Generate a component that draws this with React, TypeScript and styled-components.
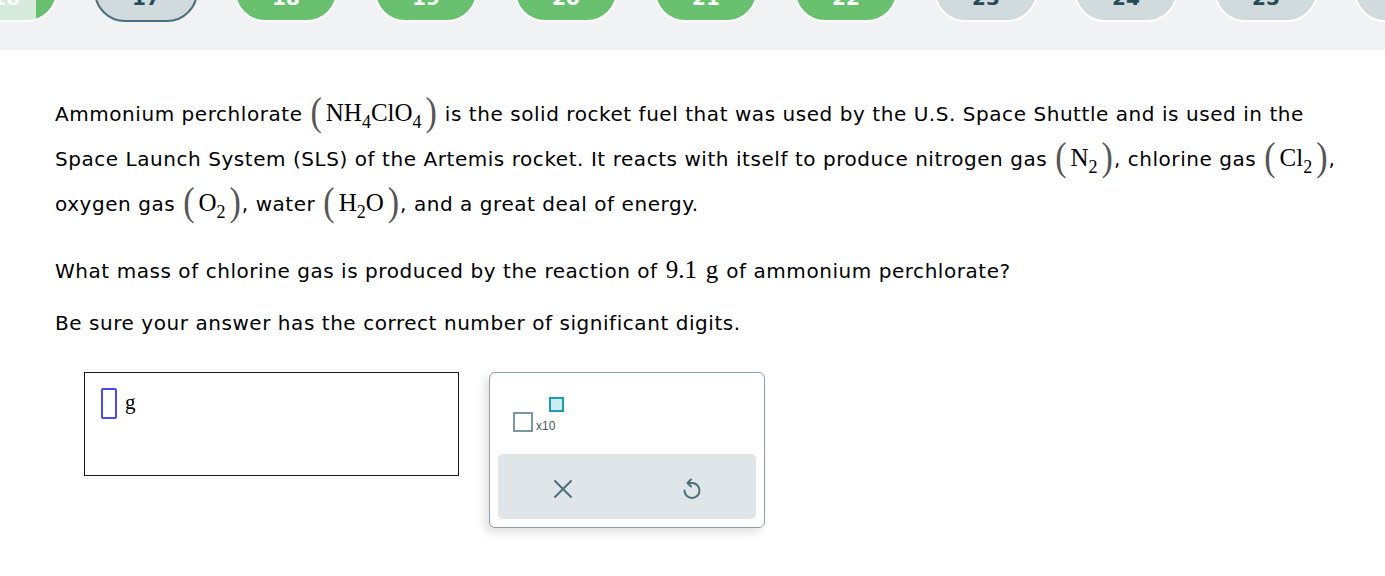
import styled, { createGlobalStyle } from "styled-components";

const GlobalStyle = createGlobalStyle`
    html, body {
        margin: 0;
        padding: 0;
        background: #ffffff;
    }
    body {
        font-family: "DejaVu Sans", Verdana, sans-serif;
        color: #000000;
    }
`

const pills = [
    {n: 16, state: "done"},
    {n: 17, state: "current"},
    {n: 18, state: "done"},
    {n: 19, state: "done"},
    {n: 20, state: "done"},
    {n: 21, state: "done"},
    {n: 22, state: "done"},
    {n: 23, state: "todo"},
    {n: 24, state: "todo"},
    {n: 25, state: "todo"},
    {n: 26, state: "todo"},
] as const;

type PillState = "done" | "current" | "todo";

export default function App() {
    return (
        <>
            <GlobalStyle/>
            <Page>
                <TopBar>
                    <PillRow>
                        {pills.map((p, i) => (
                            <Pill key={p.n} $state={p.state} $faded={i === 0}>
                                {p.n}
                            </Pill>
                        ))}
                    </PillRow>
                </TopBar>

                <Content>
                    <Paragraph>
                        Ammonium perchlorate{" "}
                        <Chem>
                            <Paren>(</Paren>
                            <MathText>NH<Sub>4</Sub>ClO<Sub>4</Sub></MathText>
                            <Paren>)</Paren>
                        </Chem>{" "}
                        is the solid rocket fuel that was used by the U.S. Space Shuttle and is used in the Space
                        Launch System (SLS) of the Artemis rocket. It reacts with itself to produce nitrogen gas{" "}
                        <Chem>
                            <Paren>(</Paren>
                            <MathText>N<Sub>2</Sub></MathText>
                            <Paren>)</Paren>
                        </Chem>
                        , chlorine gas{" "}
                        <Chem>
                            <Paren>(</Paren>
                            <MathText>Cl<Sub>2</Sub></MathText>
                            <Paren>)</Paren>
                        </Chem>
                        , oxygen gas{" "}
                        <Chem>
                            <Paren>(</Paren>
                            <MathText>O<Sub>2</Sub></MathText>
                            <Paren>)</Paren>
                        </Chem>
                        , water{" "}
                        <Chem>
                            <Paren>(</Paren>
                            <MathText>H<Sub>2</Sub>O</MathText>
                            <Paren>)</Paren>
                        </Chem>
                        , and a great deal of energy.
                    </Paragraph>

                    <Question>
                        What mass of chlorine gas is produced by the reaction of{" "}
                        <InlineMath>9.1</InlineMath> <InlineMath>g</InlineMath> of ammonium perchlorate?
                    </Question>
                    <Note>Be sure your answer has the correct number of significant digits.</Note>

                    <AnswerRow>
                        <AnswerBox>
                            <Cursor/>
                            <Unit>g</Unit>
                        </AnswerBox>

                        <ToolPanel>
                            <Template>
                                <BaseSlot/>
                                <TimesTen>x10</TimesTen>
                                <ExpSlot/>
                            </Template>
                            <ButtonBar>
                                <ToolButton aria-label="clear">
                                    <svg width="20" height="20" viewBox="0 0 20 20" fill="none"
                                         stroke="#4b6f7c" strokeWidth="2" strokeLinecap="round">
                                        <path d="M2 2 L18 18 M18 2 L2 18"/>
                                    </svg>
                                </ToolButton>
                                <ToolButton aria-label="undo">
                                    <svg width="22" height="22" viewBox="0 0 22 22" fill="none"
                                         stroke="#4b6f7c" strokeWidth="2" strokeLinecap="round"
                                         strokeLinejoin="round">
                                        <path d="M7 5 H11 A7.5 7.5 0 1 1 3.5 12.5"/>
                                        <path d="M10 1.5 L6.5 5 L10 8.5"/>
                                    </svg>
                                </ToolButton>
                            </ButtonBar>
                        </ToolPanel>
                    </AnswerRow>
                </Content>
            </Page>
        </>
    );
}

const Page = styled.div`
    width: 1385px;
    min-height: 576px;
    background: #ffffff;
`
const TopBar = styled.div`
    height: 50px;
    background: #f1f2f4;
    overflow: hidden;
`
const PillRow = styled.div`
    display: flex;
    gap: 36px;
    margin-left: -46px;
`
const Pill = styled.div<{ $state: PillState; $faded?: boolean }>`
    flex: 0 0 auto;
    width: 100px;
    height: 58px;
    margin-top: -40px;
    box-sizing: content-box;
    border: 2px solid ${p => (p.$state === "current" ? "#4b7080" : "#ffffff")};
    border-radius: 32px;
    background: ${p => p.$faded
            ? "linear-gradient(to right, #d6eadb 0, #d6eadb 80px, #69c16f 80px)"
            : p.$state === "done" ? "#69c16f" : "#d1dadd"};
    color: ${p => (p.$state === "done" ? "#ffffff" : "#234b5a")};
    font-family: "DejaVu Sans", sans-serif;
    font-weight: 700;
    font-size: 20px;
    line-height: 20px;
    display: flex;
    flex-direction: column;
    align-items: center;

    &::before {
        content: "";
        height: 26px;
        flex: 0 0 auto;
    }
`
const Content = styled.div`
    padding: 42px 40px 0 55px;
`
const Paragraph = styled.p`
    margin: 0;
    font-size: 20px;
    letter-spacing: 0.55px;
    line-height: 45px;
    width: 1296px;
`
const Chem = styled.span`
    display: inline-flex;
    align-items: center;
    vertical-align: middle;
    line-height: 1;
    height: 40px;
    margin-top: -6px;
    letter-spacing: 0;
`
const Paren = styled.span`
    font-family: "Liberation Serif", "Times New Roman", serif;
    font-size: 34px;
    font-weight: 300;
    color: #555555;
    display: inline-block;
    transform: scaleY(1.2);
    margin-top: -2px;
    padding: 0 1px;
`
const MathText = styled.span`
    font-family: "Liberation Serif", "Times New Roman", serif;
    font-size: 25px;
    padding: 0 3px;
`
const Sub = styled.span`
    font-size: 18px;
    position: relative;
    top: 7px;
`
const Question = styled.p`
    margin: 29px 0 0;
    font-size: 20px;
    letter-spacing: 0.55px;
    line-height: 30px;
`
const InlineMath = styled.span`
    font-family: "Liberation Serif", "Times New Roman", serif;
    font-size: 25px;
    letter-spacing: 0;
    line-height: 1;
    padding: 0 1px;
`
const Note = styled.p`
    margin: 22px 0 0;
    font-size: 20px;
    letter-spacing: 0.55px;
    line-height: 30px;
`
const AnswerRow = styled.div`
    display: flex;
    align-items: flex-start;
    gap: 30px;
    margin: 34px 0 0 29px;
`
const AnswerBox = styled.div`
    box-sizing: border-box;
    width: 375px;
    height: 104px;
    border: 1px solid #1a1a1a;
    padding: 15px 16px;
    display: flex;
    align-items: flex-start;
    gap: 8px;
`
const Cursor = styled.span`
    box-sizing: border-box;
    width: 16px;
    height: 31px;
    border: 2px solid #4a4af4;
    border-radius: 2px;
`
const Unit = styled.span`
    font-family: "Liberation Serif", "Times New Roman", serif;
    font-size: 21px;
    line-height: 26px;
    margin-top: 1px;
`
const ToolPanel = styled.div`
    box-sizing: border-box;
    width: 276px;
    height: 156px;
    border: 1px solid #8ba1a9;
    border-radius: 6px;
    background: #ffffff;
    box-shadow: -4px 5px 10px rgba(0, 0, 0, 0.12);
    padding: 8px;
    display: flex;
    flex-direction: column;
    justify-content: space-between;
`
const Template = styled.div`
    display: flex;
    align-items: flex-end;
    padding: 17px 0 0 15px;
    height: 37px;
`
const BaseSlot = styled.span`
    box-sizing: border-box;
    width: 20px;
    height: 20px;
    border: 2px solid #7b979f;
    margin-bottom: 3px;
`
const TimesTen = styled.span`
    font-family: "Liberation Sans", Arial, sans-serif;
    font-size: 12px;
    color: #3e5660;
    margin-left: 3px;
    margin-bottom: 2px;
`
const ExpSlot = styled.span`
    box-sizing: border-box;
    width: 15px;
    height: 15px;
    border: 2px solid #1b9bb1;
    background: #ccedf4;
    align-self: flex-start;
    margin-left: -6px;
    margin-top: -1px;
`
const ButtonBar = styled.div`
    display: grid;
    grid-template-columns: 1fr 1fr;
    height: 65px;
    background: #dfe5e8;
    border-radius: 5px;
`
const ToolButton = styled.button`
    border: none;
    background: transparent;
    display: flex;
    align-items: center;
    justify-content: center;
    cursor: pointer;
    padding: 0;
    padding-top: 4px;
`
